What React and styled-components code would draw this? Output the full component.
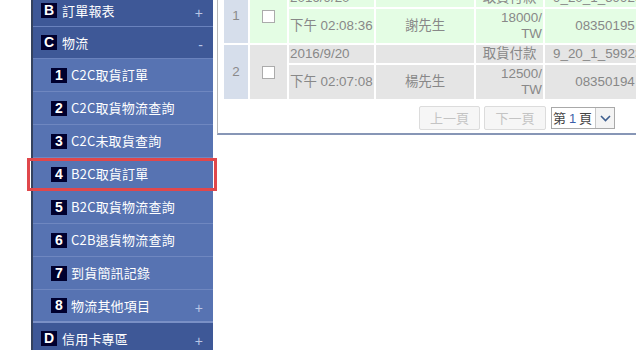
import React from "react";
import styled, { createGlobalStyle } from "styled-components";

const Global = createGlobalStyle`
  html, body { margin: 0; padding: 0; background: #fff; overflow: hidden; }
  body { font-family: "Liberation Sans", "Noto Sans CJK TC", sans-serif; }
  * { box-sizing: border-box; }
`;

const Page = styled.div`
  display: flex;
  align-items: flex-start;
  width: 640px;
  height: 350px;
  overflow: hidden;
  padding-left: 31px;
`;

const Sidebar = styled.nav`
  width: 182px;
  flex: none;
  margin-top: -5px;
  border-left: 2px solid #34425e;
  display: flex;
  flex-direction: column;
  font-family: "Noto Sans CJK TC", "Liberation Serif", sans-serif;
  color: #fff;
  font-size: 13px;
`;

const Header = styled.div`
  position: relative;
  height: 32px;
  flex: none;
  display: flex;
  align-items: center;
  gap: 5px;
  padding-left: 8px;
  background: #3e5897;
  border-bottom: 1px solid #6a82bd;
`;

const Item = styled.div`
  position: relative;
  height: 33px;
  flex: none;
  display: flex;
  align-items: center;
  gap: 4px;
  padding-left: 18px;
  background: #5773b2;
  border-bottom: ${(p) => (p.$last ? "2px solid #7a90c6" : "1px solid #6f87c0")};
`;

const Badge = styled.span`
  width: 16px;
  height: 15px;
  background: #00002e;
  color: #fff;
  font-family: "Liberation Sans", sans-serif;
  font-weight: bold;
  font-size: 14px;
  line-height: 15px;
  text-align: center;
  flex: none;
`;

const Label = styled.span`
  line-height: 16px;
  letter-spacing: 0.2px;
`;

const Toggle = styled.span`
  position: absolute;
  right: 10px;
  top: 50%;
  margin-top: -5px;
  font-family: "Liberation Sans", sans-serif;
  font-size: 14px;
  line-height: 14px;
  color: #b9c6e6;
`;

const Highlight = styled.div`
  position: absolute;
  left: -6px;
  right: -4px;
  top: 0;
  bottom: -1px;
  border: 3px solid #e0474b;
  pointer-events: none;
`;

const Main = styled.main`
  flex: none;
  margin-left: 4px;
  margin-top: -13px;
  width: 419px;
  border-left: 1px solid #b8b8b8;
  border-bottom: 2px solid #8796b6;
  padding-left: 4px;
  padding-bottom: 1px;
`;

const Clip = styled.div`
  width: 414px;
  overflow: hidden;
`;

const Table = styled.table`
  border-collapse: separate;
  border-spacing: 2px;
  margin: 0;
  font-size: 13.4px;
  color: #888;
  table-layout: fixed;
  width: 445px;
`;

const Td = styled.td`
  padding: 1px 1px;
  line-height: 16px;
  height: ${(p) => p.$h || "auto"};
  background: ${(p) => (p.$alt ? "#e5e5e5" : "#e4fde4")};
  text-align: ${(p) => p.$align || "left"};
  vertical-align: middle;
  white-space: nowrap;
  overflow: hidden;
  padding-left: ${(p) => p.$pl || "1px"};
`;

const NumTd = styled(Td)`
  background: #d6deeb;
  text-align: center;
  color: #8a8a8a;
`;

const Check = styled.span`
  display: inline-block;
  width: 13px;
  height: 13px;
  background: #fff;
  border: 1px solid #ababab;
  vertical-align: middle;
`;

const Pager = styled.div`
  display: flex;
  justify-content: flex-end;
  align-items: center;
  gap: 4px;
  padding: 5px 21px 2px 0;
  font-family: "Noto Sans CJK TC", "Liberation Sans", sans-serif;
`;

const PageButton = styled.button`
  width: ${(p) => p.$w || "61px"};
  height: 24px;
  padding: 0;
  background: #f6f6f6;
  border: 1px solid #dcdcdc;
  border-radius: 2px;
  color: #c4c4c4;
  font-family: inherit;
  font-size: 13px;
  line-height: 20px;
`;

const Select = styled.div`
  display: flex;
  align-items: stretch;
  width: 64px;
  height: 22px;
  margin-left: 1px;
  border: 1px solid #a9a9a9;
  background: #fff;
  font-size: 13px;
  color: #444;
`;

const SelectText = styled.span`
  flex: 1;
  line-height: 20px;
  padding-left: 1px;
  white-space: nowrap;
  & b { font-weight: normal; color: #3b5ea8; font-family: "Liberation Sans", sans-serif; }
`;

const Arrow = styled.span`
  width: 19px;
  display: flex;
  align-items: center;
  justify-content: center;
  border-left: 1px solid #c8c8c8;
  background: #f4f4f4;
`;

const subItems = [
  "C2C取貨訂單",
  "C2C取貨物流查詢",
  "C2C未取貨查詢",
  "B2C取貨訂單",
  "B2C取貨物流查詢",
  "C2B退貨物流查詢",
  "到貨簡訊記錄",
  "物流其他項目",
];

const rows = [
  { n: 1, date: "2016/9/20", time: "下午 02:08:36", name: "謝先生", pay: "取貨付款", amt: "18000/", id1: "9_20_1_599230", id2: "08350195", alt: false },
  { n: 2, date: "2016/9/20", time: "下午 02:07:08", name: "楊先生", pay: "取貨付款", amt: "12500/", id1: "9_20_1_599231", id2: "08350194", alt: true },
];

export default function App() {
  return (
    <>
      <Global />
      <Page>
        <Sidebar>
          <Header>
            <Badge>B</Badge>
            <Label>訂單報表</Label>
            <Toggle>+</Toggle>
          </Header>
          <Header>
            <Badge>C</Badge>
            <Label>物流</Label>
            <Toggle>-</Toggle>
          </Header>
          {subItems.map((t, i) => (
            <Item key={t} $last={i === subItems.length - 1}>
              <Badge>{i + 1}</Badge>
              <Label>{t}</Label>
              {i === 7 && <Toggle>+</Toggle>}
              {i === 3 && <Highlight />}
            </Item>
          ))}
          <Header>
            <Badge>D</Badge>
            <Label>信用卡專區</Label>
            <Toggle>+</Toggle>
          </Header>
        </Sidebar>
        <Main>
          <Clip>
            <Table>
              <colgroup>
                <col style={{ width: 24 }} />
                <col style={{ width: 37 }} />
                <col style={{ width: 85 }} />
                <col style={{ width: 98 }} />
                <col style={{ width: 67 }} />
                <col style={{ width: 120 }} />
              </colgroup>
              <tbody>
                {rows.map((r) => (
                  <React.Fragment key={r.n}>
                    <tr>
                      <NumTd rowSpan={2}>{r.n}</NumTd>
                      <Td rowSpan={2} $alt={r.alt} $align="center">
                        <Check />
                      </Td>
                      <Td $alt={r.alt} $h="18px">{r.date}</Td>
                      <Td $alt={r.alt} />
                      <Td $alt={r.alt} $align="center">{r.pay}</Td>
                      <Td $alt={r.alt} $pl="8px">{r.id1}</Td>
                    </tr>
                    <tr>
                      <Td $alt={r.alt} $h="34px">{r.time}</Td>
                      <Td $alt={r.alt} $align="center">{r.name}</Td>
                      <Td $alt={r.alt} $align="right">
                        {r.amt}
                        <br />
                        TW
                      </Td>
                      <Td $alt={r.alt} $align="center">{r.id2}</Td>
                    </tr>
                  </React.Fragment>
                ))}
              </tbody>
            </Table>
            <Pager>
              <PageButton>上一頁</PageButton>
              <PageButton $w="62px">下一頁</PageButton>
              <Select>
                <SelectText>第 <b>1</b> 頁</SelectText>
                <Arrow>
                  <svg width="11" height="7" viewBox="0 0 11 7">
                    <path d="M1 1 L5.5 5.5 L10 1" fill="none" stroke="#3f5f8f" strokeWidth="1.6" />
                  </svg>
                </Arrow>
              </Select>
            </Pager>
          </Clip>
        </Main>
      </Page>
    </>
  );
}
